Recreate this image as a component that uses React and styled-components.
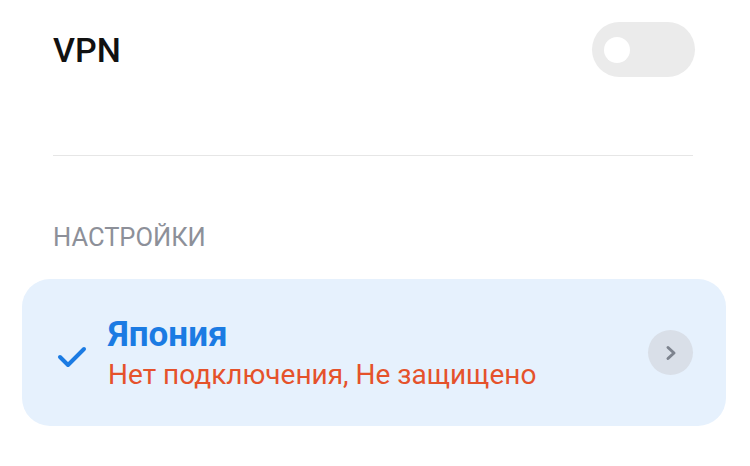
import styled, { createGlobalStyle } from 'styled-components'

const GlobalStyle = createGlobalStyle`
    body {
        margin: 0;
        background: #ffffff;
        font-family: Roboto, "Noto Sans", sans-serif;
    }
`
const Page = styled.main`
    width: 750px;
    height: 466px;
    padding-top: 22px;
    box-sizing: border-box;
    overflow: hidden;
`
const Row = styled.div`
    display: flex;
    align-items: center;
    justify-content: space-between;
    padding: 0 55px 0 53px;
    height: 55px;
`
const Title = styled.span`
    font-size: 34px;
    font-weight: 500;
    color: #111111;
`
const Toggle = styled.div`
    width: 103px;
    height: 55px;
    border-radius: 28px;
    background: #ebebeb;
    display: flex;
    align-items: center;
    padding-left: 12px;
    box-sizing: border-box;
`
const Knob = styled.div`
    width: 26px;
    height: 26px;
    border-radius: 50%;
    background: #ffffff;
`
const Divider = styled.hr`
    margin: 78px 57px 0 53px;
    border: none;
    height: 1px;
    background: #e6e6e6;
`
const SectionLabel = styled.div`
    margin: 66px 0 0 53px;
    font-size: 25.5px;
    color: #8d9099;
`
const Card = styled.div`
    margin: 27px 24px 0 22px;
    height: 147px;
    border-radius: 28px;
    background: #e6f1fd;
    display: flex;
    align-items: center;
    padding: 0 33px 0 35px;
    box-sizing: border-box;
`
const Check = styled.svg`
    width: 30px;
    height: 30px;
    flex-shrink: 0;
    margin-top: 8px;
`
const Texts = styled.div`
    flex: 1;
    display: flex;
    flex-direction: column;
    gap: 3px;
    margin: 2px 0 0 21px;
`
const Name = styled.div`
    font-size: 35px;
    font-weight: 700;
    color: #1b7be3;
    line-height: 40px;
`
const Status = styled.div`
    font-size: 28px;
    color: #e5522b;
    line-height: 34px;
`
const ChevronButton = styled.div`
    width: 45px;
    height: 45px;
    border-radius: 50%;
    background: #d9dfe8;
    display: flex;
    align-items: center;
    justify-content: center;
`

export default function App() {
    return (
        <>
            <GlobalStyle />
            <Page>
                <Row>
                    <Title>VPN</Title>
                    <Toggle>
                        <Knob />
                    </Toggle>
                </Row>
                <Divider />
                <SectionLabel>НАСТРОЙКИ</SectionLabel>
                <Card>
                    <Check viewBox="0 0 30 30">
                        <path d="M3 15 L11 23 L27 7" fill="none" stroke="#1b7be3" strokeWidth="4" strokeLinecap="round" strokeLinejoin="round" />
                    </Check>
                    <Texts>
                        <Name>Япония</Name>
                        <Status>Нет подключения, Не защищено</Status>
                    </Texts>
                    <ChevronButton>
                        <svg width="14" height="16" viewBox="0 0 14 16">
                            <path d="M4 2.5 L10 8 L4 13.5" fill="none" stroke="#7d838e" strokeWidth="3" strokeLinecap="round" strokeLinejoin="round" />
                        </svg>
                    </ChevronButton>
                </Card>
            </Page>
        </>
    )
}
